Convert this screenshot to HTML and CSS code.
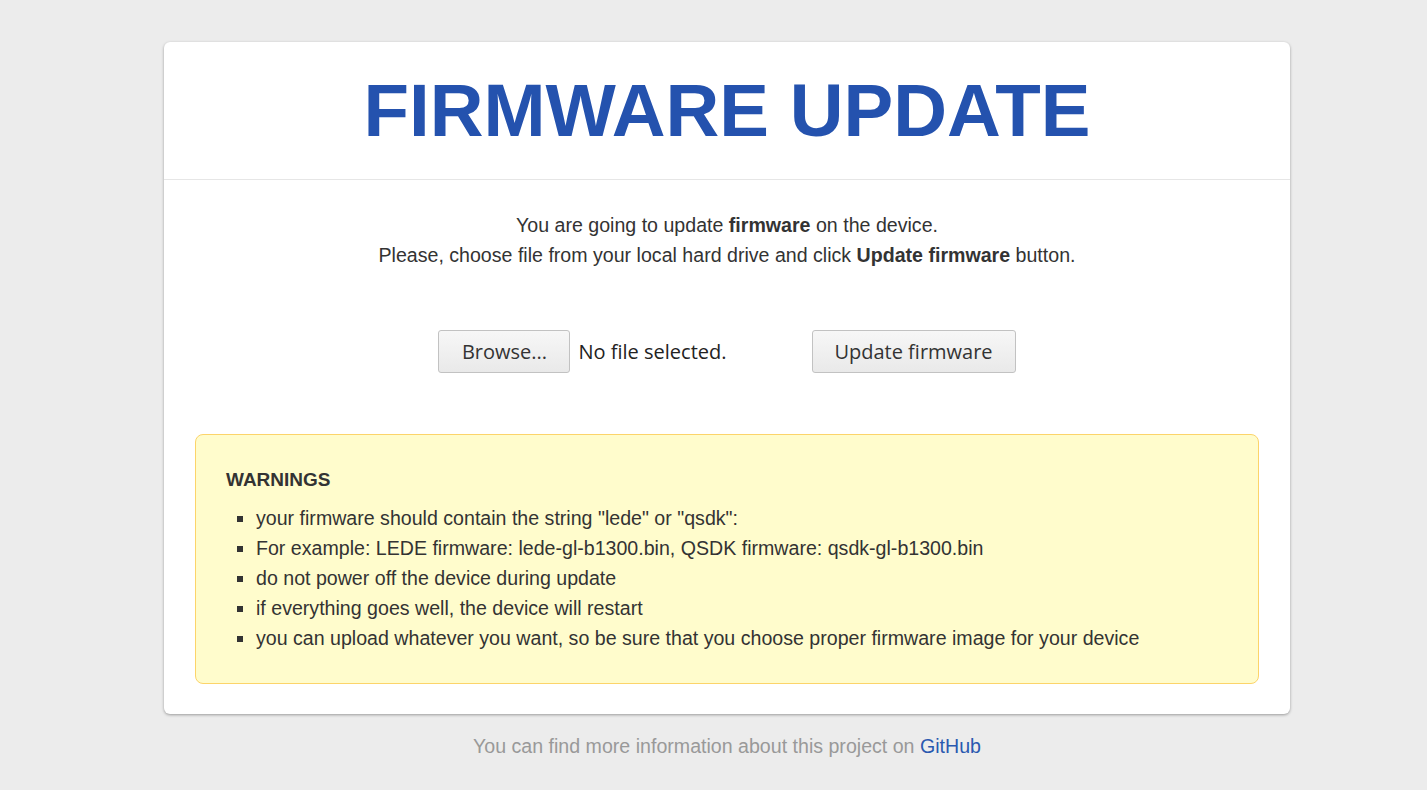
FILE: index.html
```html
<!DOCTYPE html>
<html lang="en">
<head>
<meta charset="utf-8">
<title>Firmware update</title>
<link rel="stylesheet" href="styles.css">
</head>
<body>
<div class="page">
  <div class="card">
    <header class="card-header">
      <h1 class="title">FIRMWARE UPDATE</h1>
    </header>
    <div class="card-body">
      <p class="intro">You are going to update <strong>firmware</strong> on the device.<br>Please, choose file from your local hard drive and click <strong>Update firmware</strong> button.</p>
      <form class="upload">
        <div class="file-field">
          <button type="button" class="btn btn-browse">Browse...</button>
          <span class="file-name">No file selected.</span>
        </div>
        <button type="button" class="btn btn-update">Update firmware</button>
      </form>
      <div class="warning">
        <h3 class="warning-title">WARNINGS</h3>
        <ul class="warning-list">
          <li>your firmware should contain the string "lede" or "qsdk":</li>
          <li>For example: LEDE firmware: lede-gl-b1300.bin, QSDK firmware: qsdk-gl-b1300.bin</li>
          <li>do not power off the device during update</li>
          <li>if everything goes well, the device will restart</li>
          <li>you can upload whatever you want, so be sure that you choose proper firmware image for your device</li>
        </ul>
      </div>
    </div>
  </div>
  <p class="footer">You can find more information about this project on <a href="#">GitHub</a></p>
</div>
</body>
</html>
```

FILE: styles.css
```css
html, body {
  margin: 0;
  padding: 0;
}

body {
  background: #ececec;
  font-family: "Liberation Sans", Arial, sans-serif;
  color: #333;
  font-size: 19.6px;
}

.page {
  width: 1126px;
  margin: 42px 0 0 164px;
}

.card {
  background: #fff;
  border-radius: 6px;
  box-shadow: 0 1px 3px rgba(0, 0, 0, 0.35);
}

.card-header {
  height: 137px;
  border-bottom: 1px solid #e6e6e6;
  display: flex;
  align-items: center;
  justify-content: center;
}

.title {
  margin: 2px 0 0;
  font-size: 74.5px;
  font-weight: bold;
  color: #2452ae;
  line-height: 1;
}

.card-body {
  padding: 30px 31px 30px 31px;
}

.intro {
  margin: 0;
  text-align: center;
  line-height: 30px;
  font-size: 19.6px;
}

.intro strong {
  font-weight: bold;
}

.upload {
  margin: 60px 0 0;
  display: flex;
  justify-content: center;
  align-items: center;
  gap: 85px;
}

.file-field {
  display: flex;
  align-items: center;
  gap: 8px;
}

.btn {
  font-family: "Open Sans", "Noto Sans", sans-serif;
  font-size: 20px;
  color: #333;
  height: 43px;
  padding: 0;
  border: 1px solid #c2c2c2;
  border-radius: 3px;
  background: linear-gradient(#f7f7f7, #e9e9e9);
  cursor: pointer;
}

.btn-browse {
  width: 132px;
}

.btn-update {
  width: 204px;
}

.file-name {
  font-family: "Open Sans", "Noto Sans", sans-serif;
  font-size: 20px;
  color: #222;
}

.warning {
  margin-top: 61px;
  background: #fffccc;
  border: 1px solid #fcd46a;
  border-radius: 8px;
  padding: 30px 30px 30px 30px;
}

.warning-title {
  margin: 0 0 8px;
  font-size: 19px;
  line-height: 30px;
  font-weight: bold;
  color: #333;
}

.warning-list {
  margin: 0;
  padding: 0 0 0 30px;
  list-style: square;
  line-height: 30px;
  font-size: 19.6px;
}

.footer {
  margin: 20px 0 0;
  text-align: center;
  color: #999;
  font-size: 19.6px;
  line-height: 24px;
}

.footer a {
  color: #2a59b0;
  text-decoration: none;
}
```
